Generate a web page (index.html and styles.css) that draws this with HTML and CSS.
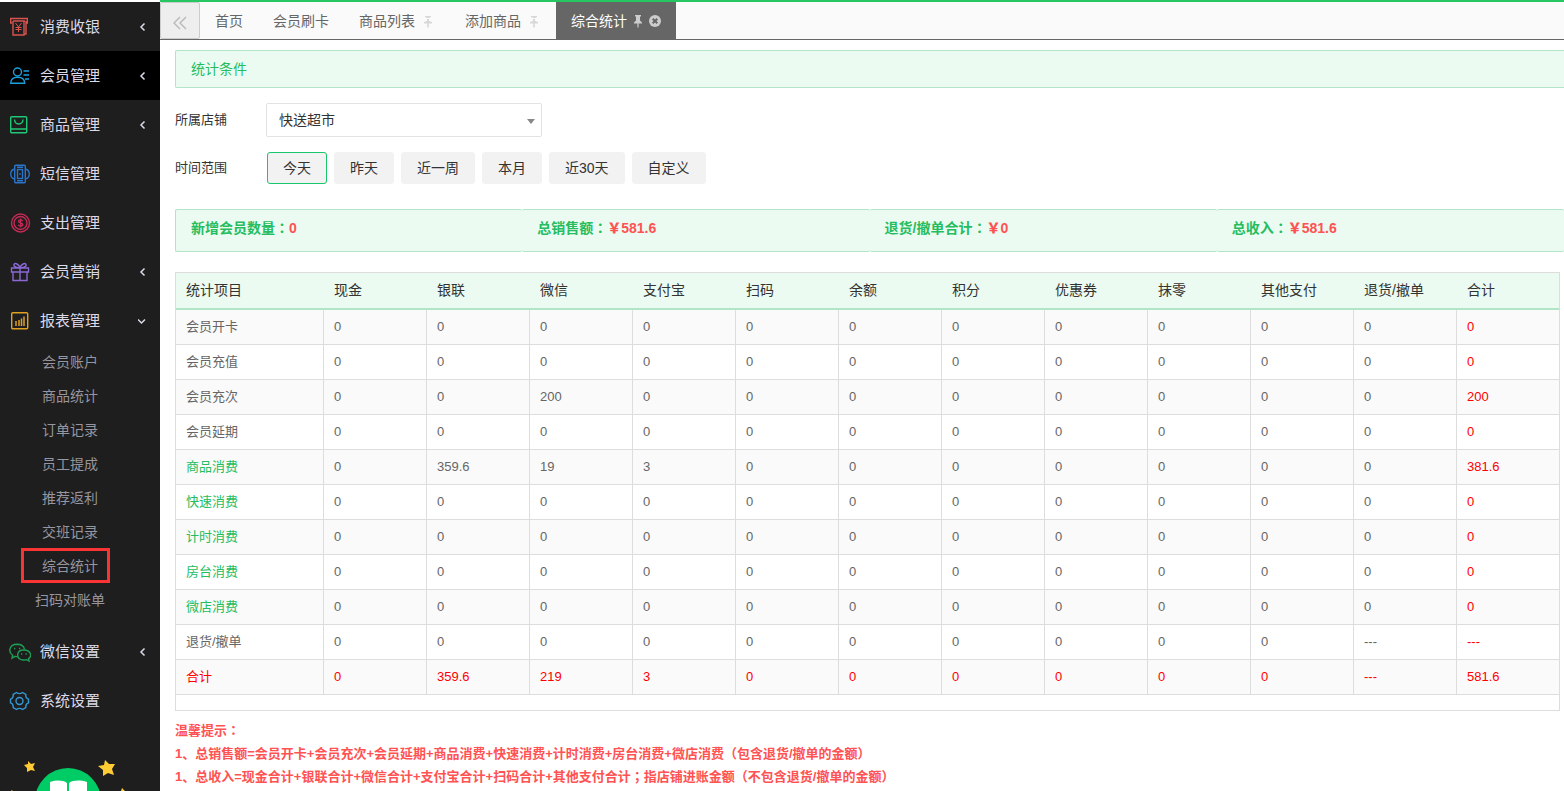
FILE: index.html
```html
<!DOCTYPE html>
<html lang="zh-CN">
<head>
<meta charset="utf-8">
<title>综合统计</title>
<link rel="stylesheet" href="styles.css">
</head>
<body>
<svg class="defs" aria-hidden="true">
  <symbol id="chev-left" viewBox="0 0 10 10"><path d="M6.500 1.500 3 5l3.500 3.500" fill="none" stroke="currentColor" stroke-width="1.500"/></symbol>
  <symbol id="chev-down" viewBox="0 0 10 10"><path d="M0 3.500 3.500 7 7 3.500" fill="none" stroke="currentColor" stroke-width="1.500"/></symbol>
  <symbol id="pin" viewBox="0 0 8 13"><path d="M1 0h6v1.500H6V5.500l2 2v1H4.600V12L4 13l-.6-1V8.500H0v-1l2-2v-4H1z" fill="currentColor"/></symbol>
  <symbol id="pin-off" viewBox="0 0 8 13"><path d="M1 1h6v1L5 3H3L1 2zM3 4h2v2l3 1v1.500H4.800v4H3.200v-4H0V7l3-1z" fill="currentColor"/></symbol>
</svg>
<aside class="sidebar">
  <nav>
    <ul class="menu">
      <li><a class="menu-link" href="#">
        <svg class="menu-icon red" viewBox="0 0 20 20"><path d="M2 6H.7V1.500h16.600V6H16M3 4h12M3 4v14h11V4M16 4v13h-2"/><path d="m5.500 6 3 4 3-4M8.500 10v5M5.500 10.500h6M5.500 12.500h6" stroke-width="1"/></svg>
        <span>消费收银</span><svg class="chev"><use href="#chev-left"/></svg></a></li>
      <li><a class="menu-link active" href="#">
        <svg class="menu-icon cyan" viewBox="0 0 20 20"><circle cx="7.500" cy="6" r="4"/><path d="M.7 17.300c0-4 3-6 7-6s7 2 7 6zM13.500 5H19M13.500 9H19M15 13h4"/></svg>
        <span>会员管理</span><svg class="chev"><use href="#chev-left"/></svg></a></li>
      <li><a class="menu-link" href="#">
        <svg class="menu-icon green" viewBox="0 0 20 20"><rect x=".7" y="1.700" width="16" height="16" rx="1"/><path d="M.7 14h16M4.500 4.500c.5 6 8 6 8.500 0"/></svg>
        <span>商品管理</span><svg class="chev"><use href="#chev-left"/></svg></a></li>
      <li><a class="menu-link" href="#">
        <svg class="menu-icon blue" viewBox="0 0 20 20"><rect x="4.700" y="1.200" width="10.600" height="17.600" rx="1"/><rect x="7.500" y="5.500" width="5" height="9"/><path d="M7 3.300h6M7 16.700h6M4.700 5C-.6 6-.6 14 4.700 15M15.300 5c5.300 1 5.300 9 0 10M9.300 10h1.500"/></svg>
        <span>短信管理</span></a></li>
      <li><a class="menu-link" href="#">
        <svg class="menu-icon crimson" viewBox="0 0 20 20"><circle cx="10.500" cy="10" r="9"/><circle cx="10.500" cy="10" r="6.500"/><path d="M12.800 8c-.5-1.500-4.300-1.500-4.300.3 0 1.900 4.300 1.300 4.300 3.300 0 1.900-3.900 1.900-4.500.1M10.600 5.500v9"/></svg>
        <span>支出管理</span></a></li>
      <li><a class="menu-link" href="#">
        <svg class="menu-icon purple" viewBox="0 0 20 20"><path d="M1.500 6h17v4h-17zM3 10v8.500h14V10M10 6v12.500M10 6C8 6 3 5 4 2.500 5 .5 9 2 10 6c1-4 5-5.500 6-3.500C17 5 12 6 10 6"/></svg>
        <span>会员营销</span><svg class="chev"><use href="#chev-left"/></svg></a></li>
      <li><a class="menu-link" href="#">
        <svg class="menu-icon amber" viewBox="0 0 20 20"><rect x="1.700" y="1.700" width="16" height="16" rx="1"/><path d="M6 10v5M9 9v6M11.500 7.500V15M14 5.500V15" stroke-width="1.500"/></svg>
        <span>报表管理</span><svg class="chev"><use href="#chev-down"/></svg></a>
        <ul class="submenu">
          <li><a href="#">会员账户</a></li>
          <li><a href="#">商品统计</a></li>
          <li><a href="#">订单记录</a></li>
          <li><a href="#">员工提成</a></li>
          <li><a href="#">推荐返利</a></li>
          <li><a href="#">交班记录</a></li>
          <li class="marked"><a href="#">综合统计</a></li>
          <li><a href="#">扫码对账单</a></li>
        </ul></li>
      <li><a class="menu-link" href="#">
        <svg class="menu-icon wechat" viewBox="0 0 22 20"><path d="M9 14.500c-1 .2-2 .1-3-.2L3 16l.6-2.700C-1 10 0 2.500 8 2.300c4 0 7 2 7.500 5.200"/><path d="M15 8c-8 0-8.500 9-1 10 1.500.2 2.500 0 3.500-.3L20 19l-.5-2.300C23.500 14 21.500 8 15 8z"/><path d="M5 6.500h1.300M10 6.500h1.300M12 12h1.300M16.500 12h1.300"/></svg>
        <span>微信设置</span><svg class="chev"><use href="#chev-left"/></svg></a></li>
      <li><a class="menu-link" href="#">
        <svg class="menu-icon sky" viewBox="0 0 20 20"><circle cx="9.500" cy="10" r="3.500"/><path d="M6.500 1.500c2 1.500 4 1.500 6 0L15.800 3.400c-.3 2.600.5 4 2.700 4.800v3.600c-2.200.8-3 2.200-2.700 4.800l-3.300 1.900c-2-1.500-4-1.500-6 0l-3.300-1.900c.3-2.600-.5-4-2.700-4.800V8.200c2.200-.8 3-2.200 2.700-4.800z"/></svg>
        <span>系统设置</span></a></li>
    </ul>
  </nav>
  <svg class="mascot" viewBox="0 0 160 80" aria-hidden="true">
    <circle cx="68" cy="46" r="33" fill="#0c6"/>
    <path d="M50 27c6-2 13-2 17 1v22H50zM69 28c4-3 11-3 18-1v23H69z" fill="#fff"/>
    <g fill="#fc3"><path d="m28 6 3 3 4-1-2 4 2 4-4-1-4 2v-4l-3-3 4-1z"/><path d="m105 5 4 4 6 0-3 5 2 6-6-2-5 3v-6l-5-4 6-1z"/><path d="m12 35 2 3 4 1-3 3v4l-4-2-4 1 1-4-2-3 4-1z"/><path d="m122 33 3 3 5 0-3 4 1 5-4-2-4 2v-5l-3-3 4-1z"/></g>
  </svg>
</aside>
<main class="main">
  <div class="tabs">
    <button class="collapse" type="button" aria-label="收起"><svg viewBox="0 0 14 14"><path d="M7 1 1 7l6 6M13 1 7 7l6 6" fill="none" stroke="currentColor" stroke-width="1.500"/></svg></button>
    <a class="tab" href="#">首页</a>
    <a class="tab" href="#">会员刷卡</a>
    <a class="tab" href="#">商品列表<svg class="pin"><use href="#pin-off"/></svg></a>
    <a class="tab" href="#">添加商品<svg class="pin"><use href="#pin-off"/></svg></a>
    <a class="tab current" href="#">综合统计<svg class="pin"><use href="#pin"/></svg><svg class="close" viewBox="0 0 12 12"><circle cx="6" cy="6" r="6" fill="#ccc"/><path d="m3.700 3.700 4.600 4.600m0-4.600L3.700 8.300" stroke="#666" stroke-width="2"/></svg></a>
  </div>
  <div class="content">
    <h1 class="banner">统计条件</h1>
    <form class="filters">
      <label class="label" for="shop">所属店铺</label>
      <div class="select-box"><select id="shop"><option>快送超市</option></select></div>
      <span class="label" id="range">时间范围</span>
      <div class="ranges" role="group" aria-labelledby="range">
        <button type="button" class="selected">今天</button>
        <button type="button">昨天</button>
        <button type="button">近一周</button>
        <button type="button">本月</button>
        <button type="button">近30天</button>
        <button type="button">自定义</button>
      </div>
    </form>
    <div class="stats">
      <div class="stat">新增会员数量<span class="mid" lang="zh-TW">：</span><b>0</b></div>
      <div class="stat">总销售额<span class="mid" lang="zh-TW">：</span><b>￥581.6</b></div>
      <div class="stat">退货/撤单合计<span class="mid" lang="zh-TW">：</span><b>￥0</b></div>
      <div class="stat">总收入<span class="mid" lang="zh-TW">：</span><b>￥581.6</b></div>
    </div>
    <div class="table-box">
      <table>
        <thead><tr><th class="item">统计项目</th><th>现金</th><th>银联</th><th>微信</th><th>支付宝</th><th>扫码</th><th>余额</th><th>积分</th><th>优惠券</th><th>抹零</th><th>其他支付</th><th>退货/撤单</th><th class="sum">合计</th></tr></thead>
        <tbody>
          <tr><td>会员开卡</td><td>0</td><td>0</td><td>0</td><td>0</td><td>0</td><td>0</td><td>0</td><td>0</td><td>0</td><td>0</td><td>0</td><td>0</td></tr>
          <tr><td>会员充值</td><td>0</td><td>0</td><td>0</td><td>0</td><td>0</td><td>0</td><td>0</td><td>0</td><td>0</td><td>0</td><td>0</td><td>0</td></tr>
          <tr><td>会员充次</td><td>0</td><td>0</td><td>200</td><td>0</td><td>0</td><td>0</td><td>0</td><td>0</td><td>0</td><td>0</td><td>0</td><td>200</td></tr>
          <tr><td>会员延期</td><td>0</td><td>0</td><td>0</td><td>0</td><td>0</td><td>0</td><td>0</td><td>0</td><td>0</td><td>0</td><td>0</td><td>0</td></tr>
          <tr><td><a href="#">商品消费</a></td><td>0</td><td>359.6</td><td>19</td><td>3</td><td>0</td><td>0</td><td>0</td><td>0</td><td>0</td><td>0</td><td>0</td><td>381.6</td></tr>
          <tr><td><a href="#">快速消费</a></td><td>0</td><td>0</td><td>0</td><td>0</td><td>0</td><td>0</td><td>0</td><td>0</td><td>0</td><td>0</td><td>0</td><td>0</td></tr>
          <tr><td><a href="#">计时消费</a></td><td>0</td><td>0</td><td>0</td><td>0</td><td>0</td><td>0</td><td>0</td><td>0</td><td>0</td><td>0</td><td>0</td><td>0</td></tr>
          <tr><td><a href="#">房台消费</a></td><td>0</td><td>0</td><td>0</td><td>0</td><td>0</td><td>0</td><td>0</td><td>0</td><td>0</td><td>0</td><td>0</td><td>0</td></tr>
          <tr><td><a href="#">微店消费</a></td><td>0</td><td>0</td><td>0</td><td>0</td><td>0</td><td>0</td><td>0</td><td>0</td><td>0</td><td>0</td><td>0</td><td>0</td></tr>
          <tr><td>退货/撤单</td><td>0</td><td>0</td><td>0</td><td>0</td><td>0</td><td>0</td><td>0</td><td>0</td><td>0</td><td>0</td><td>---</td><td>---</td></tr>
          <tr class="total"><td>合计</td><td>0</td><td>359.6</td><td>219</td><td>3</td><td>0</td><td>0</td><td>0</td><td>0</td><td>0</td><td>0</td><td>---</td><td>581.6</td></tr>
        </tbody>
      </table>
    </div>
    <div class="tips">
      <p>温馨提示<span class="mid" lang="zh-TW">：</span></p>
      <p>1、总销售额=会员开卡+会员充次+会员延期+商品消费+快速消费+计时消费+房台消费+微店消费（包含退货/撤单的金额）</p>
      <p>1、总收入=现金合计+银联合计+微信合计+支付宝合计+扫码合计+其他支付合计<span class="mid" lang="zh-TW">；</span>指店铺进账金额（不包含退货/撤单的金额）</p>
    </div>
  </div>
</main>
</body>
</html>
```
FILE: styles.css
```css
* { box-sizing: border-box; }
body {
  margin: 0;
  height: 100vh;
  display: flex;
  overflow: hidden;
  background: #fff;
  color: #333;
  font: 14px/20px "Liberation Sans", "Noto Sans CJK SC", sans-serif;
}
a { color: inherit; text-decoration: none; }
ul { list-style: none; margin: 0; padding: 0; }
button, select { font: inherit; color: inherit; }
.defs { display: none; }
/* full-width punctuation centred in its cell */
.mid { font-family: "Noto Sans CJK TC", sans-serif; line-height: 1; }

.sidebar {
  flex: 0 0 160px;
  margin-top: 2px;
  background: #1e1e1e;
  overflow: hidden;
}
.menu-link {
  display: flex;
  align-items: center;
  height: 49px;
  padding: 0 12px 0 9px;
  color: #dcd9e8;
  font-size: 15px;
}
.menu-link.active { background: #000; }
.menu-icon {
  width: 22px;
  height: 20px;
  margin-right: 9px;
  fill: none;
  stroke: currentColor;
  stroke-width: 1.4;
}
.chev { width: 10px; height: 10px; margin-left: auto; }
.red { color: #d9534f; }
.cyan { color: #1c9fdc; }
.green { color: #1fc776; }
.blue { color: #2a74c9; }
.crimson { color: #c42a55; }
.purple { color: #8b68d4; }
.amber { color: #e0a020; }
.wechat { color: #1e9e55; }
.sky { color: #3399d6; }

.submenu { width: 140px; padding-bottom: 10px; text-align: center; color: #97959f; }
.submenu a { display: block; line-height: 34px; }
.marked { position: relative; }
.marked::after {
  content: "";
  position: absolute;
  inset: -1px 30px 0 21px;
  border: 3px solid #f83434;
}
.mascot { display: block; width: 160px; height: 80px; margin-top: 30px; }

.main { flex: 1; min-width: 0; border-top: 2px solid #25c763; }
.tabs {
  display: flex;
  height: 38px;
  background: #fafafa;
  border-bottom: 1px solid #666;
}
.collapse {
  display: flex;
  align-items: center;
  justify-content: center;
  width: 40px;
  padding: 4px 0 0;
  border: 1px solid #ccc;
  border-radius: 2px;
  background: #eee;
  color: #bbb;
}
.collapse svg { width: 14px; height: 14px; }
.tab { display: flex; align-items: center; padding: 0 15px; color: #666; }
.pin { width: 8px; height: 13px; margin: 2px 3px 0 9px; color: #d8d8d8; }
.current { background: #666; color: #fff; }
.current .pin { margin: 2px 7px 0 7px; color: #ccc; }
.close { width: 12px; height: 12px; }

.content { padding: 10px 0 0 15px; }
.banner {
  margin: 0 0 15px;
  padding: 8px 15px;
  border: 1px solid #b2e5c8;
  border-right: 0;
  border-radius: 2px 0 0 2px;
  background: #ebfbf1;
  color: #25bd60;
  font-size: 14px;
  font-weight: 400;
}
.filters {
  display: grid;
  grid-template-columns: 91px 1fr;
  row-gap: 15px;
  align-items: center;
}
.label { font-size: 13px; }
.select-box { position: relative; width: 276px; }
.select-box select {
  display: block;
  width: 100%;
  height: 34px;
  padding: 0 12px;
  border: 1px solid #e2e2e2;
  border-radius: 2px;
  background: #fff;
  appearance: none;
}
.select-box::after {
  content: "";
  position: absolute;
  right: 7px;
  top: 16px;
  border: 4px solid transparent;
  border-top: 5px solid #888;
  border-bottom: 0;
}
.ranges { display: flex; gap: 7px; padding-left: 1px; }
.ranges button {
  height: 32px;
  padding: 0 15px;
  border: 1px solid #f2f2f2;
  border-radius: 3px;
  background: #f2f2f2;
}
.ranges .selected { border-color: #18c66c; }

.stats { display: grid; grid-template-columns: repeat(4, 1fr); margin: 25px 0 20px; }
.stat {
  height: 43px;
  padding: 8px 15px;
  border: solid #b2e5c8;
  border-width: 1px 0;
  border-radius: 2px;
  background: #ebfbf1;
  color: #25bd60;
  font-weight: 700;
}
.stat:first-child { border-left-width: 1px; }
.stat b { color: #ff5252; }

.table-box { margin-right: 4px; padding-bottom: 15px; border: 1px solid #ddd; }
table { width: 100%; table-layout: fixed; border-spacing: 0; }
th, td { padding: 0 10px; text-align: left; }
th {
  height: 37px;
  padding-bottom: 2px;
  border-bottom: 2px solid #b2e5c8;
  background: #ebfbf1;
  font-weight: 400;
}
.item { width: 148px; }
.sum { width: 102px; }
td {
  height: 35px;
  border: solid #ddd;
  border-width: 0 1px 1px 0;
  color: #666;
  font-size: 13px;
}
td:last-child { border-right: 0; color: #f00; }
td a { color: #25bd60; }
tbody tr:nth-child(odd) { background: #fafafa; }
.total td { color: #f00; }

.tips { padding-top: 8px; color: #ff5252; font-size: 13px; font-weight: 700; line-height: 23px; }
.tips p { margin: 0; white-space: nowrap; }
```
